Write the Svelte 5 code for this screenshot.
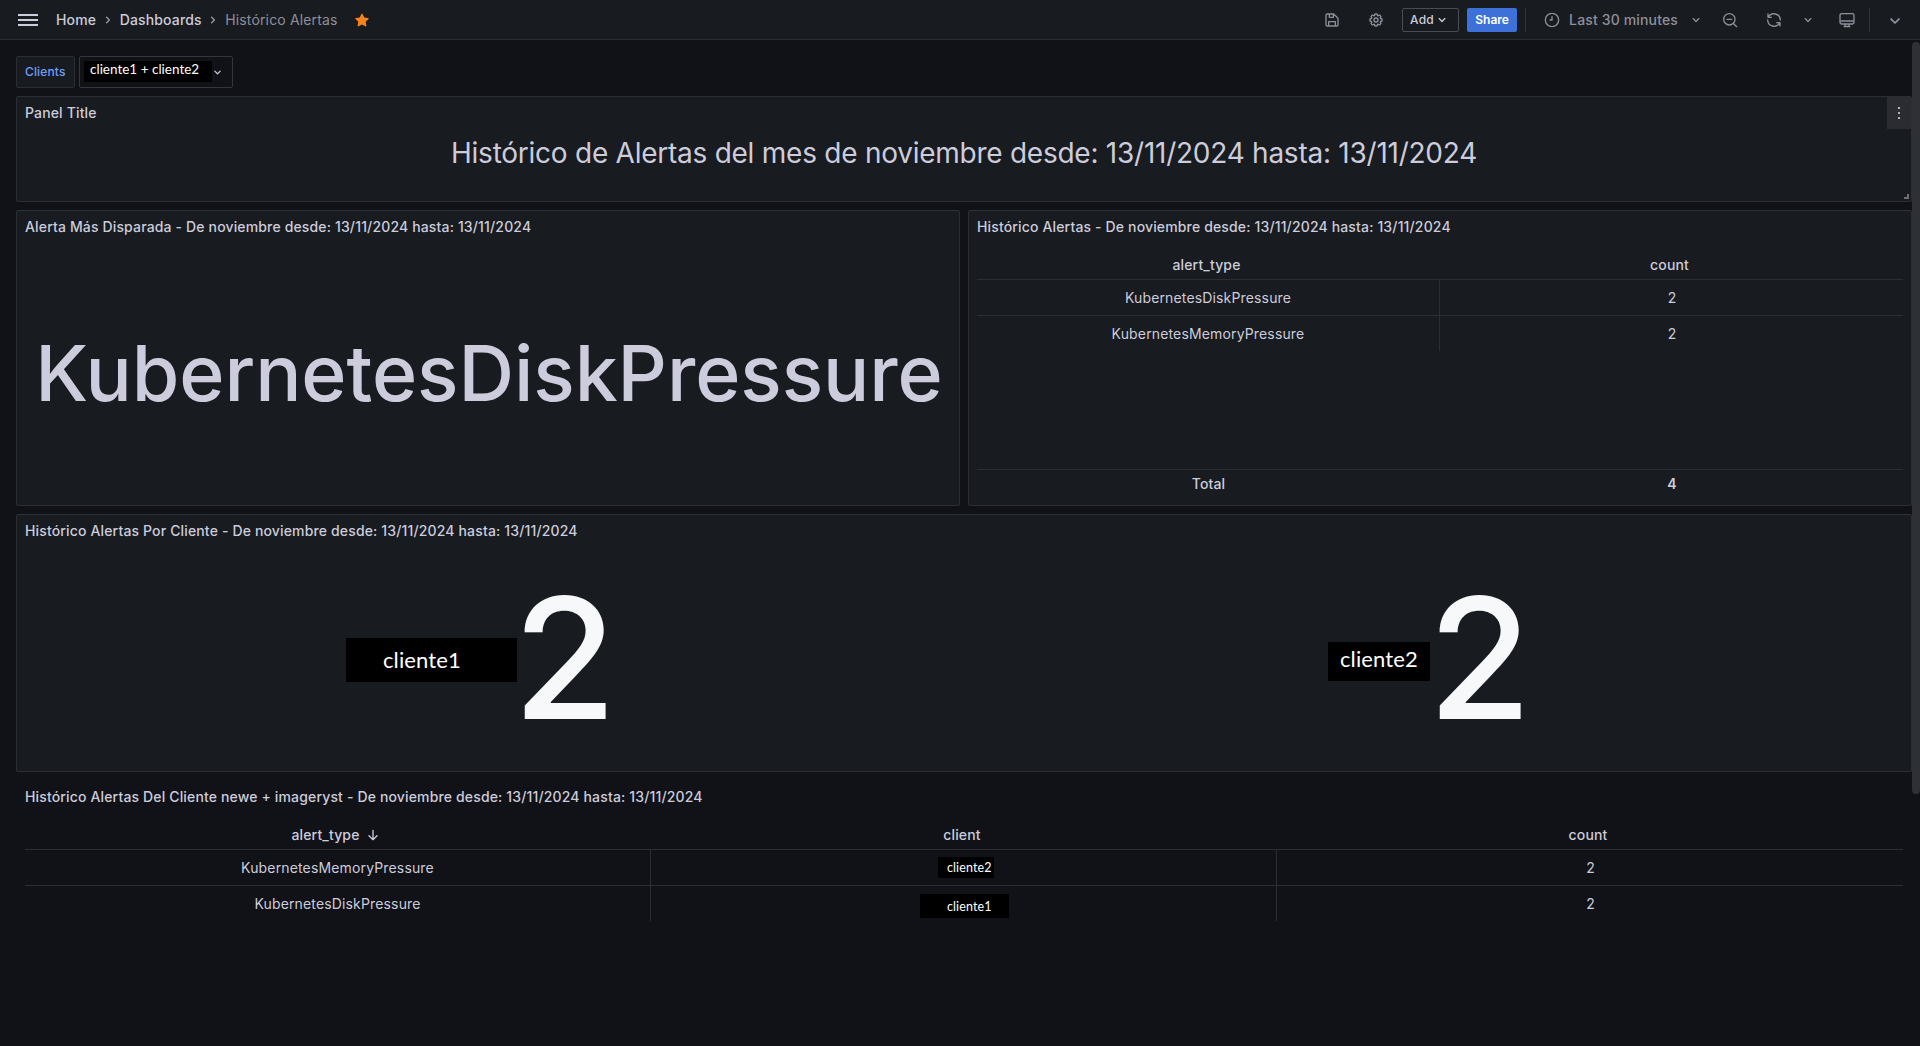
<script>
  const crumbs = ['Home', 'Dashboards', 'Histórico Alertas'];
  const range = 'De noviembre desde: 13/11/2024 hasta: 13/11/2024';
  const summary = [
    ['KubernetesDiskPressure', '2'],
    ['KubernetesMemoryPressure', '2'],
  ];
  const detail = [
    { type: 'KubernetesMemoryPressure', client: 'cliente2', tag: 'tag-second', count: 2 },
    { type: 'KubernetesDiskPressure', client: 'cliente1', tag: 'tag-first', count: 2 },
  ];
</script>

{#snippet chevron(size)}
  <svg width={size} height={size} viewBox="0 0 24 24" fill="currentColor"><path d="M17 9.17a1 1 0 0 0-1.41 0L12 12.71 8.46 9.17a1 1 0 1 0-1.41 1.42l4.24 4.24a1 1 0 0 0 1.42 0L17 10.59a1 1 0 0 0 0-1.42Z" /></svg>
{/snippet}

<div class="app">
  <header>
    <svg class="burger" width="20" height="12" viewBox="0 0 20 12" stroke="currentColor" stroke-width="2"><path d="M0 1h20M0 6h20M0 11h20" /></svg>
    <nav>
      {#each crumbs as crumb, i}
        {#if i > 0}
          <svg class="sep" width="16" height="16" viewBox="0 0 24 24" fill="currentColor"><path d="M14.83 11.29 10.59 7.05a1 1 0 0 0-1.42 1.41L12.71 12l-3.54 3.54a1 1 0 1 0 1.42 1.41l4.24-4.24a1 1 0 0 0 0-1.42Z" /></svg>
        {/if}
        <span class:current={i === 2}>{crumb}</span>
      {/each}
    </nav>
    <svg class="star" width="16" height="16" viewBox="0 0 24 24" fill="currentColor"><path d="M22 9.67a1 1 0 0 0-.86-.67l-5.69-.83L12.9 3a1 1 0 0 0-1.8 0L8.55 8.16 2.86 9a1 1 0 0 0-.81.68 1 1 0 0 0 .25 1l4.13 4-1 5.68A1 1 0 0 0 6.9 21.44L12 18.77l5.1 2.67a1 1 0 0 0 1.45-1.05l-1-5.68 4.13-4A1 1 0 0 0 22 9.67Z" /></svg>

    <div class="tools">
      <svg class="save" width="16" height="16" viewBox="0 0 24 24" fill="none" stroke="currentColor" stroke-width="2" stroke-linejoin="round"><path d="M3 5a2 2 0 0 1 2-2h9.5L21 9.5V19a2 2 0 0 1-2 2H5a2 2 0 0 1-2-2ZM8 3v5h6V3M7 21v-6.500h10V21" /></svg>
      <svg class="gear" width="16" height="16" viewBox="0 0 24 24" fill="currentColor"><path d="M21.32,9.55l-1.89-.63.89-1.78A1,1,0,0,0,20.13,6L18,3.87a1,1,0,0,0-1.15-.19l-1.78.89-.63-1.89A1,1,0,0,0,13.5,2h-3a1,1,0,0,0-.95.68L8.92,4.57,7.14,3.68A1,1,0,0,0,6,3.87L3.87,6a1,1,0,0,0-.19,1.15l.89,1.78-1.89.63A1,1,0,0,0,2,10.5v3a1,1,0,0,0,.68.95l1.89.63-.89,1.78A1,1,0,0,0,3.87,18L6,20.13a1,1,0,0,0,1.15.19l1.78-.89.63,1.89a1,1,0,0,0,.95.68h3a1,1,0,0,0,.95-.68l.63-1.89,1.78.89A1,1,0,0,0,18,20.13L20.13,18a1,1,0,0,0,.19-1.15l-.89-1.78,1.89-.63A1,1,0,0,0,22,13.5v-3A1,1,0,0,0,21.32,9.55ZM20,12.78l-1.2.4A2,2,0,0,0,17.64,16l.57,1.14-1.1,1.1L16,17.64a2,2,0,0,0-2.79,1.16l-.4,1.2H11.22l-.4-1.2A2,2,0,0,0,8,17.64l-1.14.57-1.1-1.1L6.36,16A2,2,0,0,0,5.2,13.18L4,12.78V11.22l1.2-.4A2,2,0,0,0,6.36,8L5.79,6.89l1.1-1.1L8,6.36A2,2,0,0,0,10.82,5.2l.4-1.2h1.56l.4,1.2A2,2,0,0,0,16,6.36l1.14-.57,1.1,1.1L17.64,8a2,2,0,0,0,1.16,2.79l1.2.4ZM12,8a4,4,0,1,0,4,4A4,4,0,0,0,12,8Zm0,6a2,2,0,1,1,2-2A2,2,0,0,1,12,14Z" /></svg>
      <button class="add">Add {@render chevron(16)}</button>
      <button class="share">Share</button>
      <i class="rule"></i>
      <svg class="clock" width="16" height="16" viewBox="0 0 24 24" fill="none" stroke="currentColor" stroke-width="2" stroke-linecap="round"><circle cx="12" cy="12" r="10" /><path d="M12 7v5H9" /></svg>
      <span class="time">Last 30 minutes</span>
      <span class="c1">{@render chevron(16)}</span>
      <svg class="zoom" width="16" height="16" viewBox="0 0 24 24" fill="none" stroke="currentColor" stroke-width="2" stroke-linecap="round"><circle cx="11" cy="11" r="8.500" /><path d="m17.500 17.500 4.500 4.500M7.500 11h7" /></svg>
      <svg class="sync" width="16" height="16" viewBox="0 0 24 24" fill="none" stroke="currentColor" stroke-width="2" stroke-linecap="round" stroke-linejoin="round"><path d="M3 3v5h5M3.500 8A9.500 9.500 0 0 1 21.500 12M21 21v-5h-5M20.500 16A9.500 9.500 0 0 1 2.500 12" /></svg>
      <span class="c2">{@render chevron(16)}</span>
      <svg class="screen" width="16" height="16" viewBox="0 0 24 24" fill="none" stroke="currentColor" stroke-width="2" stroke-linejoin="round"><rect x="1.500" y="2.500" width="21" height="15.500" rx="2.500" /><path d="M2 13.500h20M9 18v3.500h6V18M7 22h10" /></svg>
      <i class="rule last"></i>
      <span class="c3">{@render chevron(22)}</span>
    </div>
  </header>

  <div class="filters">
    <span class="label">Clients</span>
    <div class="select"><span class="picked">cliente1 + cliente2</span>{@render chevron(15)}</div>
  </div>

  <main>
    <section class="panel wide text-panel">
      <h2>Panel Title</h2>
      <h1>Histórico de Alertas del mes de noviembre desde: 13/11/2024 hasta: 13/11/2024</h1>
      <span class="menu"><svg width="16" height="16" viewBox="0 0 16 16" fill="currentColor"><path d="M7 2h2v2H7zM7 7h2v2H7zM7 12h2v2H7z" /></svg></span>
      <i class="grip"></i>
    </section>

    <section class="panel">
      <h2>Alerta Más Disparada - {range}</h2>
      <div class="top-alert">KubernetesDiskPressure</div>
    </section>

    <section class="panel">
      <h2>Histórico Alertas - {range}</h2>
      <div class="table two">
        <div class="row head"><span>alert_type</span><span>count</span></div>
        {#each summary as cells}
          <div class="row">{#each cells as cell}<span>{cell}</span>{/each}</div>
        {/each}
        <div class="row foot"><span>Total</span><span>4</span></div>
      </div>
    </section>

    <section class="panel wide">
      <h2>Histórico Alertas Por Cliente - {range}</h2>
      <div class="stats">
        <div class="stat one"><span class="name">cliente1</span><b>2</b></div>
        <div class="stat other"><span class="name">cliente2</span><b>2</b></div>
      </div>
    </section>

    <section class="panel wide clear">
      <h2>Histórico Alertas Del Cliente newe + imageryst - {range}</h2>
      <div class="table three">
        <div class="row head">
          <span>alert_type <svg width="16" height="16" viewBox="0 0 24 24" fill="none" stroke="currentColor" stroke-width="2" stroke-linecap="round" stroke-linejoin="round"><path d="M12 5v14M6 13l6 6 6-6" /></svg></span>
          <span>client</span><span>count</span>
        </div>
        {#each detail as item}
          <div class="row"><span>{item.type}</span><span><em class={item.tag}>{item.client}</em></span><span>{item.count}</span></div>
        {/each}
      </div>
    </section>
  </main>
  <i class="scrollbar"></i>
</div>

<style>
  :global(body) { margin: 0; background: #111217; }
  .app {
    position: relative; box-sizing: border-box; width: 1920px; height: 1046px; overflow: hidden;
    background: #111217; color: #ccccdc;
    font: 400 14px/22px Inter, sans-serif; letter-spacing: 0.15px;
  }
  .app :global(*) { box-sizing: border-box; }
  svg { display: block; flex: none; }
  i { display: block; }
  header { display: flex; align-items: center; height: 40px; padding-left: 18px; background: #181b1f; border-bottom: 1px solid #2d2e33; }
  nav { display: flex; align-items: center; margin-left: 18px; font-weight: 500; }
  .sep { margin: 0 4px 0 3.5px; color: #9899a5; }
  .current { color: #8e8f9b; font-weight: 400; }
  .star { margin-left: 16px; color: #f5821b; }
  .tools { display: flex; align-items: center; margin-left: auto; color: #8e8f9b; }
  .gear { margin-left: 28px; }
  button { height: 24px; padding: 0; font: 500 12px/22px Inter, sans-serif; letter-spacing: 0.15px; border-radius: 2px; }
  .add { display: flex; align-items: center; width: 57px; margin-left: 18px; padding-left: 7px; color: #ccccdc; background: transparent; border: 1px solid #4a4c52; }
  .share { width: 50px; margin-left: 8px; color: #fff; background: #3d71d9; border: 0; font-weight: 600; letter-spacing: 0; }
  .rule { width: 1px; height: 24px; margin-left: 8px; background: #34363b; }
  .clock { margin-left: 18px; }
  .time { margin-left: 9px; font-weight: 500; }
  .c1 { margin-left: 10px; }
  .zoom { margin-left: 18px; }
  .sync { margin-left: 28px; }
  .c2 { margin-left: 18px; }
  .screen { margin-left: 23px; }
  .last { margin-left: 14px; }
  .c3 { margin: 2px 14px 0 14px; }

  .filters { display: flex; gap: 4px; padding: 16px 16px 8px; }
  .label { width: 59px; height: 32px; padding-left: 8px; font: 500 12px/30px Inter, sans-serif; color: #6e9fff; background: #181b1f; border: 1px solid #2d2e33; border-radius: 2px; }
  .select { display: flex; align-items: center; width: 154px; height: 32px; padding-left: 4px; border: 1px solid #35363b; border-radius: 2px; }
  .picked { width: 128px; height: 21px; margin-bottom: 1px; padding-left: 6px; background: #000; color: #fff; font: 400 13.500px/17px Lato, sans-serif; letter-spacing: 0; white-space: nowrap; }
  .select :global(svg) { margin-left: -2.5px; }

  main { display: grid; grid-template-columns: 944px 944px; grid-template-rows: 106px 296px 258px 266px; gap: 8px; padding-left: 16px; }
  .panel { position: relative; display: flex; flex-direction: column; background: #181b1f; border: 1px solid #2d2e33; border-radius: 2px; }
  .wide { grid-column: span 2; }
  .clear { background: transparent; border-color: transparent; }
  h2 { margin: 0; height: 31px; padding-left: 8px; font-size: 14px; line-height: 31px; font-weight: 500; }
  h1 { margin: 9px 0 0; font-size: 28px; line-height: 32px; font-weight: 400; letter-spacing: -0.250px; text-align: center; }
  .menu { position: absolute; top: 0; right: 0; display: grid; place-items: center; width: 24px; height: 32px; background: #2a2c31; color: #b0b1bd; }
  .grip { position: absolute; right: 2px; bottom: 2px; width: 5px; height: 5px; border: solid #6d6f74; border-width: 0 2px 2px 0; }
  .top-alert { flex: 1; display: flex; align-items: center; justify-content: center; padding: 0 0 2px 2px; font-size: 77px; font-weight: 500; letter-spacing: -0.080px; white-space: nowrap; }

  .table { flex: 1; display: flex; flex-direction: column; margin: 0 8px; }
  .row { display: grid; height: 36px; }
  .two .row { grid-template-columns: 1fr 1fr; }
  .three .row { grid-template-columns: repeat(3, 1fr); }
  .row span { display: flex; align-items: center; justify-content: center; border-right: 1px solid #2d2e33; }
  .row span:last-child { border-right: 0; padding-left: 1px; }
  .row + .row span { border-bottom: 1px solid #2d2e33; }
  .row:nth-child(3) { height: 35px; }
  .row:nth-child(3) span { border-bottom: 0; }
  .row.head { height: 38px; border-bottom: 1px solid #2d2e33; font-weight: 500; }
  .row.head span { border: 0; padding: 9px 4px 0 0; }
  .head svg { margin-left: 5px; }
  .row.foot { margin-top: auto; height: 36px; border-top: 1px solid #2d2e33; font-weight: 500; }
  .row.foot span { border: 0; padding-bottom: 7px; }
  .row.foot span:last-child { font-weight: 600; }
  em { display: block; color: #fff; background: #000; font: 400 12.500px/21px Lato, sans-serif; letter-spacing: 0.1px; white-space: nowrap; }
  .tag-second { width: 56px; height: 21px; padding-left: 9px; margin-left: 5px; }
  .tag-first { width: 89px; height: 24px; padding-left: 27px; margin: 5px 0 0 2px; line-height: 26px; }

  .stats { flex: 1; display: grid; grid-template-columns: 915px 1fr; padding-bottom: 1px; }
  .stat { display: flex; align-items: center; }
  .one { padding-left: 329px; }
  .other { padding-left: 396px; }
  .name { color: #fff; background: #000; font-family: Lato, sans-serif; font-size: 22px; letter-spacing: 0.120px; }
  .one .name { width: 171px; height: 44px; padding-left: 37px; line-height: 44px; margin-top: 4px; }
  .other .name { width: 102px; height: 39px; padding-left: 12px; line-height: 34px; margin-top: 7px; }
  b { font-size: 168px; line-height: 200px; font-weight: 500; color: #f7f8fa; letter-spacing: 0; }
  .one b { margin-left: -4px; }
  .other b { margin-left: -2px; }
  .scrollbar { position: absolute; top: 42px; right: 0; width: 8px; height: 752px; border-radius: 4px; background: #2f3035; }
</style>
